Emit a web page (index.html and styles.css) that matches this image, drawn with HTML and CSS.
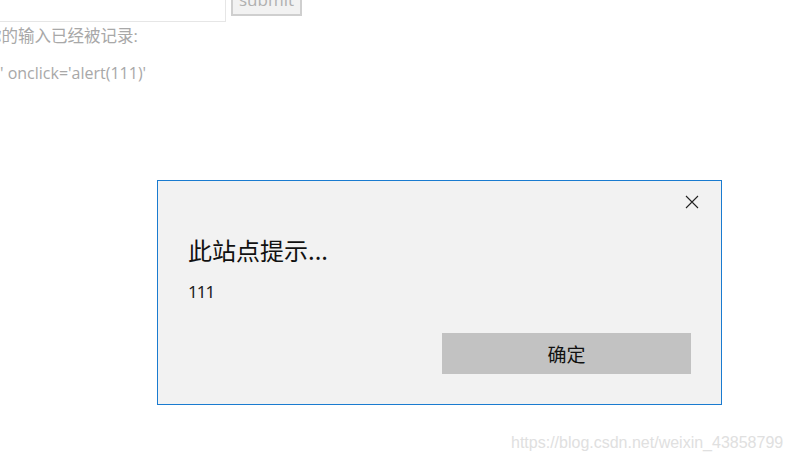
FILE: index.html
```html
<!DOCTYPE html>
<html lang="zh-CN">
<head>
  <meta charset="UTF-8">
  <title>此站点提示</title>
  <link rel="stylesheet" href="styles.css">
</head>
<body>
  <div class="page">
    <form class="search">
      <input type="text" class="search-input">
      <button type="button" class="search-btn">submit</button>
    </form>
    <p class="msg">你的输入已经被记录:</p>
    <p class="msg payload">' onclick='alert(111)'</p>
  </div>

  <div class="dialog">
    <div class="dialog-head">
      <svg class="close" width="14" height="14" viewBox="0 0 14 14">
        <path d="M1 1 L13 13 M13 1 L1 13" stroke="#222" stroke-width="1.1" fill="none"/>
      </svg>
    </div>
    <div class="dialog-title">此站点提示...</div>
    <div class="dialog-text">111</div>
    <div class="dialog-foot">
      <button type="button" class="ok">确定</button>
    </div>
  </div>

  <div class="watermark">https://blog.csdn.net/weixin_43858799</div>
</body>
</html>
```

FILE: styles.css
```css
html, body {
  margin: 0;
  height: 100%;
  background: #fff;
  overflow: hidden;
}
body {
  position: relative;
  font-family: "Open Sans", "Noto Sans CJK SC", sans-serif;
}
.page {
  margin: -18px 0 0 -15px;
}
.search {
  display: flex;
  align-items: flex-start;
  gap: 5px;
}
.search-input {
  box-sizing: border-box;
  width: 241px;
  height: 40px;
  border: 1px solid #e6e6e6;
  background: #fff;
  margin: 0;
}
.search-btn {
  box-sizing: border-box;
  width: 71px;
  height: 34px;
  margin: 0;
  border: 2px solid #cfcfcf;
  background: #f2f2f2;
  color: #b0b0b0;
  font-family: "Open Sans", sans-serif;
  font-size: 17px;
  padding: 0;
}
.msg {
  margin: 3px 0 0 0;
  font-size: 16.5px;
  line-height: 22px;
  color: #a8a8a8;
}
.payload {
  margin-top: 15px;
  padding-left: 15px;
  font-size: 16px;
}
.dialog {
  position: absolute;
  left: 157px;
  top: 180px;
  width: 563px;
  height: 223px;
  border: 1px solid #1a7bd0;
  background: #f2f2f2;
  display: flex;
  flex-direction: column;
}
.dialog-head {
  display: flex;
  justify-content: flex-end;
  padding: 14px 22px 0 0;
  height: 14px;
}
.dialog-title {
  padding-left: 30px;
  margin-top: 26px;
  font-family: "Noto Sans CJK SC", sans-serif;
  font-size: 24px;
  line-height: 30px;
  color: #111;
}
.dialog-text {
  padding-left: 30px;
  margin-top: 16px;
  font-family: "Noto Sans", sans-serif;
  font-size: 17px;
  line-height: 22px;
  color: #222;
  letter-spacing: -1px;
}
.dialog-foot {
  margin-top: auto;
  padding: 0 30px 30px 0;
  display: flex;
  justify-content: flex-end;
}
.ok {
  width: 249px;
  height: 41px;
  border: none;
  background: #c2c2c2;
  font-family: "Noto Sans CJK SC", sans-serif;
  font-size: 19px;
  color: #111;
  padding: 0;
}
.watermark {
  position: absolute;
  left: 511px;
  top: 434px;
  font-family: "Liberation Sans", Arial, sans-serif;
  font-size: 16px;
  color: #e0e0e0;
}
```
